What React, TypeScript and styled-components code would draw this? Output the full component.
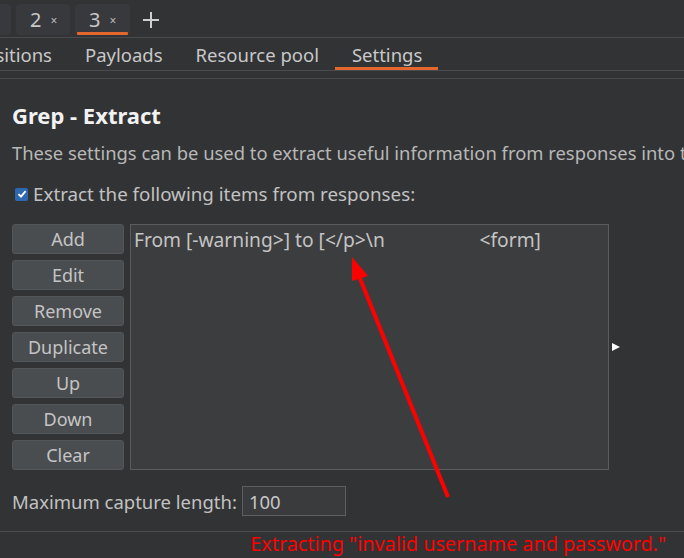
import React from "react";
import styled, { createGlobalStyle } from "styled-components";

const Global = createGlobalStyle`
  html, body { margin: 0; padding: 0; background: #323335; }
  body { font-family: "Noto Sans", "DejaVu Sans", sans-serif; }
  * { box-sizing: border-box; }
`;

const Page = styled.div`
  position: relative;
  width: 684px;
  height: 558px;
  overflow: hidden;
  background: #323335;
  color: #c6c6c6;
  display: flex;
  flex-direction: column;
`;

const TopBar = styled.div`
  height: 38px;
  border-bottom: 1px solid #4a4b4e;
  display: flex;
  align-items: flex-start;
  gap: 5px;
  padding-top: 4px;
  margin-left: -48px;
`;

const TopTab = styled.div<{ $active?: boolean; $w: number }>`
  position: relative;
  width: ${(p) => p.$w}px;
  height: 31px;
  background: #38393c;
  border-radius: 4px;
  display: flex;
  align-items: center;
  padding-left: 14px;
  gap: 9px;
  font-size: 20px;
  color: #c8c8c8;
  &::after {
    content: "";
    display: ${(p) => (p.$active ? "block" : "none")};
    position: absolute;
    left: 2px;
    right: 2px;
    bottom: 0;
    height: 3px;
    border-radius: 1px;
    background: #e4672d;
  }
`;

const Close = styled.span`
  font-size: 12px;
  color: #b8b8b8;
  margin-top: 2px;
`;

const PlusBtn = styled.div`
  height: 31px;
  display: flex;
  align-items: center;
  padding-left: 7px;
`;

const SubBar = styled.div`
  height: 33px;
  border-bottom: 1px solid #4a4b4e;
  display: flex;
  margin-left: -44px;
`;

const SubTab = styled.div<{ $active?: boolean }>`
  position: relative;
  padding: 0 16px 0 17px;
  height: 32px;
  display: flex;
  align-items: center;
  font-size: 18.5px;
  color: #c8c8c8;
  &::after {
    content: "";
    display: ${(p) => (p.$active ? "block" : "none")};
    position: absolute;
    left: 0;
    right: 0;
    bottom: 0;
    height: 3px;
    background: #e4672d;
  }
`;

const Strip = styled.div`
  height: 8px;
  border-bottom: 1px solid #47484b;
`;

const Content = styled.div`
  padding: 22px 0 0 12px;
  display: flex;
  flex-direction: column;
`;

const Title = styled.div`
  font-size: 22px;
  font-weight: 700;
  line-height: 28px;
  color: #f2f2f2;
`;

const Desc = styled.div`
  margin-top: 12px;
  font-size: 18.4px;
  line-height: 24px;
  white-space: nowrap;
  color: #b7b7b7;
`;

const CheckRow = styled.label`
  margin-top: 17px;
  display: flex;
  align-items: center;
  gap: 5px;
  font-size: 18.8px;
  line-height: 24px;
  color: #c2c2c2;
  padding-left: 3px;
`;

const CheckBox = styled.span`
  width: 13px;
  height: 13px;
  border-radius: 2px;
  background: #2e68b1;
  display: flex;
  align-items: center;
  justify-content: center;
`;

const ListArea = styled.div`
  margin-top: 18px;
  display: flex;
  gap: 6px;
  align-items: flex-start;
`;

const Buttons = styled.div`
  display: flex;
  flex-direction: column;
  gap: 6px;
`;

const Button = styled.div`
  width: 112px;
  height: 30px;
  border-radius: 3px;
  background: #4a4d50;
  border: 1px solid #54575a;
  display: flex;
  align-items: center;
  justify-content: center;
  font-size: 18px;
  color: #c4c4c4;
`;

const ListBox = styled.div`
  width: 479px;
  height: 246px;
  background: #3c3d3f;
  border: 1px solid #5b5c5e;
  padding: 3px 3px;
  font-size: 19.2px;
  line-height: 24px;
  color: #c4c4c4;
  white-space: pre;
`;

const Expander = styled.div`
  margin-top: 119px;
  margin-left: -3px;
  width: 0;
  height: 0;
  border-top: 4.5px solid transparent;
  border-bottom: 4.5px solid transparent;
  border-left: 8px solid #ffffff;
`;

const MaxRow = styled.div`
  margin-top: 16px;
  display: flex;
  align-items: center;
  gap: 5px;
  font-size: 18.5px;
  color: #c2c2c2;
`;

const Input = styled.div`
  width: 104px;
  height: 30px;
  background: #3a3b3d;
  border: 1px solid #5e5f62;
  padding-left: 6px;
  display: flex;
  align-items: center;
  font-size: 18.5px;
  color: #c8c8c8;
`;

const Footer = styled.div`
  margin-top: 15px;
  border-top: 1px solid #4c4d50;
  display: flex;
  justify-content: flex-end;
  padding-right: 18px;
`;

const Annotation = styled.div`
  font-size: 19.8px;
  line-height: 24px;
  color: #ff0000;
`;

const Overlay = styled.svg`
  position: absolute;
  left: 0;
  top: 0;
  pointer-events: none;
`;

const topTabs = [
  { label: "1", w: 59 },
  { label: "2", w: 54 },
  { label: "3", w: 55, active: true },
];

const subTabs = ["Positions", "Payloads", "Resource pool", "Settings"];
const buttons = ["Add", "Edit", "Remove", "Duplicate", "Up", "Down", "Clear"];

export default function App() {
  return (
    <>
      <Global />
      <Page>
        <TopBar>
          {topTabs.map((t) => (
            <TopTab key={t.label} $w={t.w} $active={t.active}>
              <span>{t.label}</span>
              <Close>×</Close>
            </TopTab>
          ))}
          <PlusBtn>
            <svg width="18" height="18" viewBox="0 0 18 18">
              <path d="M9 1v16M1 9h16" stroke="#cfcfcf" strokeWidth="2" />
            </svg>
          </PlusBtn>
        </TopBar>
        <SubBar>
          {subTabs.map((s) => (
            <SubTab key={s} $active={s === "Settings"}>
              {s}
            </SubTab>
          ))}
        </SubBar>
        <Strip />
        <Content>
          <Title>Grep - Extract</Title>
          <Desc>
            These settings can be used to extract useful information from responses into the attack results table.
          </Desc>
          <CheckRow>
            <CheckBox>
              <svg width="10" height="10" viewBox="0 0 10 10">
                <path d="M1.5 5.2 L4 7.7 L8.6 2.2" stroke="#fff" strokeWidth="1.8" fill="none" />
              </svg>
            </CheckBox>
            Extract the following items from responses:
          </CheckRow>
          <ListArea>
            <Buttons>
              {buttons.map((b) => (
                <Button key={b}>{b}</Button>
              ))}
            </Buttons>
            <ListBox>{"From [-warning>] to [</p>\\n                   <form]"}</ListBox>
            <Expander />
          </ListArea>
          <MaxRow>
            Maximum capture length:
            <Input>100</Input>
          </MaxRow>
        </Content>
        <Footer>
          <Annotation>Extracting "invalid username and password."</Annotation>
        </Footer>
        <Overlay width="684" height="558" viewBox="0 0 684 558">
          <line x1="448" y1="497" x2="359" y2="276" stroke="#ff0000" strokeWidth="4" />
          <polygon points="352,257 368,276 352,281" fill="#ff0000" />
        </Overlay>
      </Page>
    </>
  );
}
